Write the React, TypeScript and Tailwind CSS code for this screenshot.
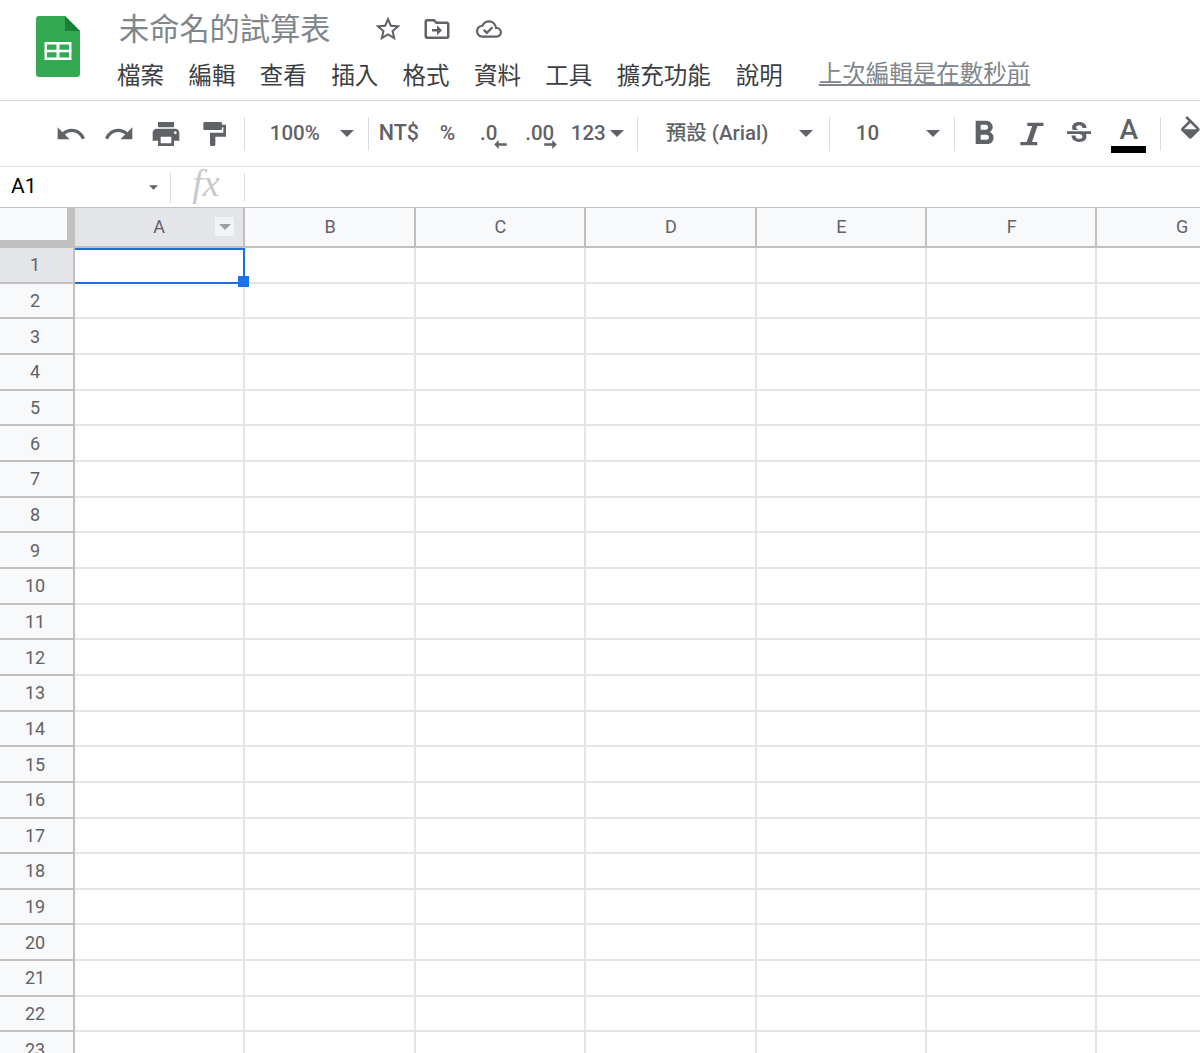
import React from "react";

const SANS = "font-['Roboto','Noto_Sans_CJK_TC',sans-serif]";

const COLS = ["A", "B", "C", "D", "E", "F", "G"];
const ROWS = Array.from({ length: 23 }, (_, i) => i + 1);
const MENU = [
  { t: "檔案", w: "w-[71.4px]" },
  { t: "編輯", w: "w-[71.4px]" },
  { t: "查看", w: "w-[71.4px]" },
  { t: "插入", w: "w-[71.4px]" },
  { t: "格式", w: "w-[71.4px]" },
  { t: "資料", w: "w-[71.4px]" },
  { t: "工具", w: "w-[71.4px]" },
  { t: "擴充功能", w: "w-[119px]" },
  { t: "說明", w: "w-[83px]" },
];

function Caret({ className = "w-[14px] h-[7px] fill-[#5f6368]" }: { className?: string }) {
  return (
    <svg viewBox="0 0 14 7" className={`shrink-0 ${className}`}>
      <path d="M0 0h14L7 7z" />
    </svg>
  );
}

function Sep({ h = "h-[34px]" }: { h?: string }) {
  return <div className={`w-px ${h} bg-[#dadce0] shrink-0`} />;
}

function Icon({ children, size = "w-[32px] h-[32px]" }: { children: React.ReactNode; size?: string }) {
  return (
    <div className="w-[47.7px] flex items-center justify-center shrink-0">
      <svg viewBox="0 0 24 24" className={`${size} fill-[#5f6368]`}>
        {children}
      </svg>
    </div>
  );
}

function Logo() {
  return (
    <svg viewBox="0 0 44 61" className="w-[44px] h-[61px]">
      <path d="M3 0h26l15 15v43a3 3 0 0 1-3 3H3a3 3 0 0 1-3-3V3a3 3 0 0 1 3-3z" fill="#34a853" />
      <path d="M29 0l15 15H29z" fill="#188038" />
      <path d="M8.5 26h27v18h-27z M11 28.5v5.2h9.5v-5.2z M23.5 28.5v5.2h9.5v-5.2z M11 36.3v5.2h9.5v-5.2z M23.5 36.3v5.2h9.5v-5.2z" fill="#fff" fillRule="evenodd" />
    </svg>
  );
}

function Header() {
  return (
    <header className="h-[101px] border-b border-[#dadce0] flex shrink-0">
      <div className="w-[117px] pl-[36px] pt-[16px] shrink-0">
        <Logo />
      </div>
      <div className="flex-1 min-w-0">
        <div className="h-[58px] flex items-center">
          <div className="text-[30.2px] leading-[36px] text-[#80868b] w-[256px] pl-[2px] pt-[2px] whitespace-nowrap">未命名的試算表</div>
          <svg viewBox="0 0 24 24" className="w-[30px] h-[30px] fill-[#5f6368] mr-[19px] shrink-0">
            <path d="M22 9.24l-7.19-.62L12 2 9.19 8.63 2 9.24l5.46 4.73L5.82 21 12 17.27 18.18 21l-1.63-7.03L22 9.24zM12 15.4l-3.76 2.27 1-4.28-3.32-2.88 4.38-.38L12 6.1l1.71 4.04 4.38.38-3.32 2.88 1 4.28L12 15.4z" />
          </svg>
          <svg viewBox="0 0 24 24" className="w-[30px] h-[30px] fill-[#5f6368] mr-[24px] shrink-0">
            <path d="M20 6h-8l-2-2H4c-1.1 0-2 .9-2 2v12c0 1.1.9 2 2 2h16c1.1 0 2-.9 2-2V8c0-1.1-.9-2-2-2zm0 12H4V6h5.17l2 2H20v10zm-8-6H8v2h4v3l4-4-4-4v3z" />
          </svg>
          <svg viewBox="0 0 24 24" className="w-[26px] h-[26px] fill-[#5f6368] shrink-0">
            <path d="M19.35 10.04A7.49 7.49 0 0 0 12 4C9.11 4 6.6 5.64 5.35 8.04A5.994 5.994 0 0 0 0 14c0 3.31 2.69 6 6 6h13c2.76 0 5-2.24 5-5 0-2.64-2.05-4.78-4.65-4.96zM19 18H6c-2.21 0-4-1.79-4-4 0-2.05 1.53-3.76 3.56-3.97l1.07-.11.5-.95A5.469 5.469 0 0 1 12 6c2.62 0 4.88 1.86 5.39 4.43l.3 1.5 1.53.11A2.98 2.98 0 0 1 22 15c0 1.65-1.35 3-3 3zm-9-3.82l-2.09-2.09L6.5 13.5 10 17l6.01-6.01-1.41-1.41z" />
          </svg>
        </div>
        <div className="flex items-center h-[36px]">
          {MENU.map((m) => (
            <div key={m.t} className={`${m.w} text-[23.5px] leading-[36px] text-[#3c4043] shrink-0`}>
              {m.t}
            </div>
          ))}
          <div className="text-[23.5px] leading-[36px] text-[#80868b] underline whitespace-nowrap mb-[4px]">上次編輯是在數秒前</div>
        </div>
      </div>
    </header>
  );
}

function Toolbar() {
  return (
    <div className="h-[66px] border-b border-[#e0e0e0] flex items-center pl-[47px] text-[#5f6368] overflow-hidden shrink-0 text-[20.5px] font-medium">
      <Icon>
        <path d="M12.5 8c-2.65 0-5.05.99-6.9 2.6L2 7v9h9l-3.62-3.62c1.39-1.16 3.16-1.88 5.12-1.88 3.54 0 6.55 2.31 7.6 5.5l2.37-.78C21.08 11.03 17.15 8 12.5 8z" />
      </Icon>
      <Icon>
        <path d="M18.4 10.6C16.55 8.99 14.15 8 11.5 8c-4.65 0-8.58 3.03-9.96 7.22L3.9 16c1.05-3.19 4.05-5.5 7.6-5.5 1.95 0 3.73.72 5.12 1.88L13 16h9V7l-3.6 3.6z" />
      </Icon>
      <Icon>
        <path d="M19 8H5c-1.66 0-3 1.34-3 3v6h4v4h12v-4h4v-6c0-1.66-1.34-3-3-3zm-3 11H8v-5h8v5zm3-7c-.55 0-1-.45-1-1s.45-1 1-1 1 .45 1 1-.45 1-1 1zm-1-9H6v4h12V3z" />
      </Icon>
      <Icon>
        <path d="M18 5V4c0-.55-.45-1-1-1H5c-.55 0-1 .45-1 1v4c0 .55.45 1 1 1h12c.55 0 1-.45 1-1V7h1v4H9v9c0 .55.45 1 1 1h2c.55 0 1-.45 1-1v-6h8V5h-3z" />
      </Icon>
      <div className="ml-[6px]"><Sep /></div>
      <div className="w-[123px] flex items-center shrink-0 pl-[25px]">
        <span className="w-[70px]">100%</span>
        <Caret />
      </div>
      <Sep />
      <div className="w-[71px] pl-[10px] shrink-0 text-[21.5px]">NT$</div>
      <div className="w-[24px] shrink-0 text-[21px]">%</div>
      <div className="w-[50px] flex justify-center relative shrink-0">
        <span>.0</span>
        <svg viewBox="0 0 14 10" className="absolute left-[30px] top-[22px] w-[13px] h-[9px] fill-[#5f6368]"><path d="M5 0v3.5h9v3H5V10L0 5z" /></svg>
      </div>
      <div className="w-[52px] flex justify-center relative shrink-0">
        <span>.00</span>
        <svg viewBox="0 0 14 10" className="absolute left-[30px] top-[22px] w-[13px] h-[9px] fill-[#5f6368]"><path d="M9 0v3.5H0v3h9V10l5-5z" /></svg>
      </div>
      <div className="w-[71px] flex items-center shrink-0 pl-[5px]">
        <span>123</span>
        <Caret className="w-[14px] h-[7px] fill-[#5f6368] ml-[4px]" />
      </div>
      <Sep />
      <div className="w-[191px] flex items-center shrink-0 pl-[28px]">
        <span className="w-[133px] whitespace-nowrap">預設 (Arial)</span>
        <Caret />
      </div>
      <Sep />
      <div className="w-[124px] flex items-center shrink-0 pl-[26px]">
        <span className="w-[70px]">10</span>
        <Caret />
      </div>
      <Sep />
      <div className="w-[5px] shrink-0" />
      <Icon size="w-[40px] h-[40px]">
        <path d="M15.6 10.79c.97-.67 1.65-1.77 1.65-2.79 0-2.26-1.75-4-4-4H7v14h7.04c2.09 0 3.71-1.7 3.71-3.79 0-1.52-.86-2.82-2.15-3.42zM10 6.5h3c.83 0 1.5.67 1.5 1.5s-.67 1.5-1.5 1.5h-3v-3zm3.5 9H10v-3h3.5c.83 0 1.5.67 1.5 1.5s-.67 1.5-1.5 1.5z" />
      </Icon>
      <Icon size="w-[30px] h-[30px]">
        <path d="M9 3h13v2.6h-4.8L12.8 18.4H17V21H3.5v-2.6h5L13 5.6H9z" />
      </Icon>
      <Icon>
        <path d="M6.85 7.08C6.85 4.37 9.45 3 12.24 3c1.64 0 3 .49 3.9 1.28.77.65 1.46 1.73 1.46 3.24h-3.01c0-.31-.05-.59-.15-.85-.29-.86-1.2-1.28-2.25-1.28-1.86 0-2.34 1.02-2.34 1.7 0 .48.25.88.74 1.21.38.25.77.48 1.41.7H7.39c-.21-.34-.54-.89-.54-1.92zM21 12v-2H3v2h9.62c1.15.45 1.96.75 1.96 1.97 0 1-.81 1.67-2.28 1.67-1.54 0-2.93-.54-2.93-2.51H6.4c0 .55.08 1.13.24 1.58.81 2.29 3.29 3.3 5.67 3.3 2.27 0 5.3-.89 5.3-4.05 0-.3-.01-1.16-.48-1.94H21z" />
      </Icon>
      <div className="w-[48px] flex flex-col items-center shrink-0 ml-[2px]">
        <span className="text-[28px] leading-[30px] h-[32px] pt-[1px]">A</span>
        <div className="w-[35px] h-[7px] bg-black" />
      </div>
      <div className="ml-[7px]"><Sep /></div>
      <div className="ml-[16px] shrink-0 mt-[-3px]">
        <svg viewBox="0 0 24 24" className="w-[32px] h-[32px] fill-[#5f6368]">
          <path d="M16.56 8.94L7.62 0 6.21 1.41l2.38 2.38-5.15 5.15c-.59.59-.59 1.54 0 2.12l5.5 5.5c.29.29.68.44 1.06.44s.77-.15 1.06-.44l5.5-5.5c.59-.58.59-1.53 0-2.12zM5.21 10L10 5.21 14.79 10H5.21z" />
        </svg>
      </div>
    </div>
  );
}

function FormulaBar() {
  return (
    <div className="h-[40px] flex items-center shrink-0">
      <div className="w-[170px] h-full flex items-center pl-[11px] text-[21px] text-black shrink-0">
        <span className="w-[138px]">A1</span>
        <Caret className="w-[9px] h-[5px] fill-[#5f6368]" />
      </div>
      <Sep h="h-[31px]" />
      <div className="w-[73px] text-center font-['Liberation_Serif',serif] italic text-[38px] leading-[34px] text-[#c7c9cc] shrink-0 pb-[8px] pr-[3px]">fx</div>
      <Sep h="h-[28px]" />
    </div>
  );
}

function Grid() {
  return (
    <div className="relative flex-1 overflow-hidden">
      <div className="grid grid-cols-[75px_repeat(7,170.4px)] grid-rows-[40px] auto-rows-[35.66px] border-t border-[#c0c0c0]">
        <div className="bg-[#f8f9fa] border-r-[8px] border-b-[8px] border-[#c0c0c0]" />
        {COLS.map((c, i) => (
          <div
            key={c}
            className={`flex items-center justify-center text-[18px] text-[#5f6368] border-r-2 border-b-2 border-[#c0c0c0] relative pb-[2px] ${i === 0 ? "bg-[#e3e5e8]" : "bg-[#f8f9fa] pl-[1px]"}`}
          >
            {c}
            {i === 0 && (
              <div className="absolute right-[9px] top-[9px] w-[19px] h-[19px] bg-[#f1f3f4] flex items-center justify-center">
                <Caret className="w-[12px] h-[6px] fill-[#9aa0a6]" />
              </div>
            )}
          </div>
        ))}
        {ROWS.map((r) => (
          <React.Fragment key={r}>
            <div
              className={`flex items-center justify-center text-[18px] text-[#5f6368] border-r-2 border-b-2 border-[#c0c0c0] pr-[3px] ${r === 1 ? "bg-[#e3e5e8]" : "bg-[#f8f9fa]"}`}
            >
              {r}
            </div>
            {COLS.map((c) => (
              <div key={c} className="bg-white border-r-2 border-b-2 border-[#e5e5e5]" />
            ))}
          </React.Fragment>
        ))}
      </div>
      <div className="absolute left-[75px] top-[41px] w-[170px] h-[36px] border-t-2 border-r-2 border-b-2 border-[#1a6fdc] pointer-events-none" />
      <div className="absolute left-[238px] top-[69px] w-[11px] h-[11px] bg-[#1a73e8]" />
    </div>
  );
}

export default function App() {
  return (
    <div className={`w-[1200px] h-[1053px] bg-white overflow-hidden flex flex-col ${SANS}`}>
      <Header />
      <Toolbar />
      <FormulaBar />
      <Grid />
    </div>
  );
}
